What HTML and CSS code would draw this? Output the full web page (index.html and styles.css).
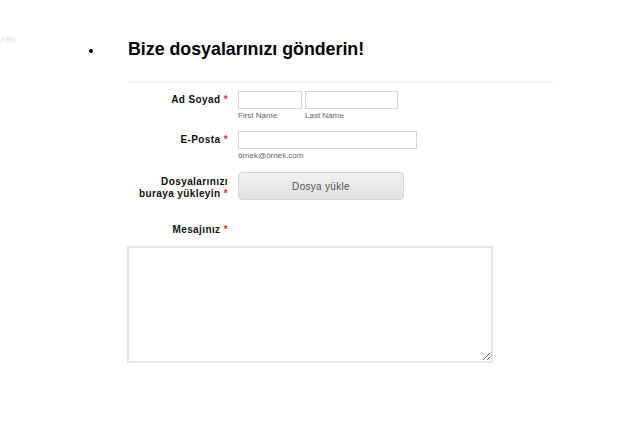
FILE: index.html
```html
<!DOCTYPE html>
<html lang="tr">
<head>
<meta charset="utf-8">
<title>Bize dosyalarınızı gönderin!</title>
<link rel="stylesheet" href="styles.css">
</head>
<body>
<div class="side-tag">ARI</div>
<div class="page">
  <ul class="title-list">
    <li class="title-item"><span class="bullet"></span><h1 class="title">Bize dosyalarınızı gönderin!</h1></li>
  </ul>
  <div class="content">
    <div class="divider"></div>
    <form class="form">
      <div class="row row-name">
        <label class="lbl">Ad Soyad <span class="req">*</span></label>
        <div class="fields">
          <div class="field">
            <input class="inp inp-first" type="text">
            <span class="sub">First Name</span>
          </div>
          <div class="field">
            <input class="inp inp-last" type="text">
            <span class="sub">Last Name</span>
          </div>
        </div>
      </div>
      <div class="row row-mail">
        <label class="lbl">E-Posta <span class="req">*</span></label>
        <div class="fields">
          <div class="field">
            <input class="inp inp-mail" type="text">
            <span class="sub">örnek@örnek.com</span>
          </div>
        </div>
      </div>
      <div class="row row-file">
        <label class="lbl">Dosyalarınızı<br>buraya yükleyin <span class="req">*</span></label>
        <div class="fields">
          <button type="button" class="upload">Dosya yükle</button>
        </div>
      </div>
      <div class="row row-msg">
        <label class="lbl">Mesajınız <span class="req">*</span></label>
      </div>
      <textarea class="msg"></textarea>
    </form>
  </div>
</div>
</body>
</html>
```
FILE: styles.css
```css
html, body {
  margin: 0;
  padding: 0;
  background: #fff;
}
body {
  font-family: "Liberation Sans", Arial, sans-serif;
  color: #000;
  position: relative;
  width: 620px;
  height: 428px;
  overflow: hidden;
}
.side-tag {
  position: absolute;
  left: 0;
  top: 35px;
  font-size: 9px;
  color: #e4e4e4;
  letter-spacing: 0.3px;
}
.page {
  padding-left: 89px;
  padding-top: 38px;
}
.title-list {
  margin: 0;
  padding: 0;
  list-style: none;
}
.title-item {
  display: flex;
  align-items: center;
}
.bullet {
  width: 4px;
  height: 4px;
  border-radius: 50%;
  background: #000;
  margin: 3px 35px 0 0;
  flex: none;
}
.title {
  margin: 0;
  font-size: 17.8px;
  font-weight: bold;
  line-height: 22px;
  color: #000;
}
.content {
  padding-left: 39px;
}
.divider {
  width: 425px;
  height: 2px;
  background: #f3f3f3;
  margin-top: 21px;
}
.form {
  margin-top: 8px;
}
.row {
  display: flex;
  align-items: flex-start;
}
.lbl {
  width: 100px;
  flex: none;
  text-align: right;
  font-size: 10px;
  font-weight: bold;
  letter-spacing: 0.4px;
  line-height: 12px;
  color: #111;
  margin-right: 10px;
}
.req {
  color: #e03030;
}
.fields {
  display: flex;
  gap: 3px;
}
.field {
  display: flex;
  flex-direction: column;
}
.inp {
  box-sizing: border-box;
  height: 18px;
  border: 1px solid #d8d8d8;
  background: #fff;
  margin: 0;
  padding: 0 3px;
  font-size: 10px;
  outline: none;
}
.inp-first { width: 64px; }
.inp-last { width: 93px; }
.inp-mail { width: 179px; }
.sub {
  font-size: 8px;
  color: #666;
  line-height: 10px;
  margin-top: 2px;
}
.row-name .lbl { padding-top: 3px; }
.row-mail { margin-top: 10px; }
.row-mail .lbl { padding-top: 3px; }
.row-file { margin-top: 11px; }
.row-file .lbl { padding-top: 4px; }
.upload {
  width: 166px;
  height: 28px;
  box-sizing: border-box;
  border: 1px solid #d4d4d4;
  border-radius: 4px;
  background: linear-gradient(#f0f0f0, #e2e2e2);
  font-family: "Liberation Sans", Arial, sans-serif;
  font-size: 10px;
  color: #555;
  letter-spacing: 0.3px;
  padding: 0;
}
.row-msg { margin-top: 24px; }
.msg {
  display: block;
  box-sizing: border-box;
  width: 366px;
  height: 117px;
  margin: 10px 0 0 -1px;
  border: 2px solid #e6e6e6;
  background: #fff;
  resize: both;
  outline: none;
  padding: 2px;
}
```
